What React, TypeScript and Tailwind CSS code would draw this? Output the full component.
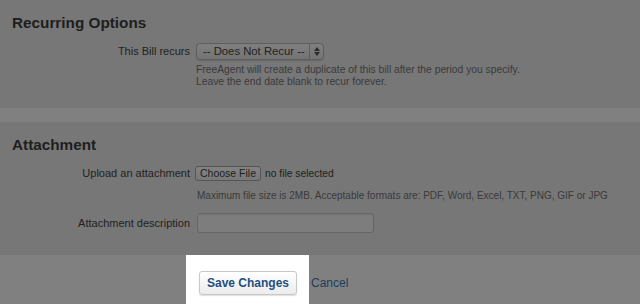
import React from "react";

const font = { fontFamily: '"Liberation Sans", Arial, Helvetica, sans-serif' };

export default function App() {
  return (
    <div className="w-[640px] h-[304px] overflow-hidden bg-[#808080]" style={font}>
      {/* Recurring Options */}
      <section className="h-[108px] bg-[#777777] pt-[14px]">
        <h2 className="pl-[12px] text-[15.3px] leading-[18px] font-bold text-[#1e1e1e]">Recurring Options</h2>
        <div className="mt-[11px] flex">
          <div className="w-[190px] text-right text-[11px] leading-[17px] text-[#222]">This Bill recurs</div>
          <div className="ml-[6px]">
            <div className="flex h-[17px] w-[128px] items-center rounded-[4px] border border-[#5e5e5e] bg-gradient-to-b from-[#7f7f7f] to-[#747474] shadow-[0_1px_1px_rgba(0,0,0,0.15)]">
              <span className="flex-1 pl-[6px] text-[11.3px] leading-[15px] text-[#222] whitespace-nowrap">-- Does Not Recur --</span>
              <span className="flex h-full w-[14px] flex-col items-center justify-center border-l border-[#5e5e5e] gap-[1px]">
                <svg width="6" height="4" viewBox="0 0 6 4"><path d="M3 0 L6 4 L0 4 Z" fill="#2a2a2a" /></svg>
                <svg width="6" height="4" viewBox="0 0 6 4"><path d="M0 0 L6 0 L3 4 Z" fill="#2a2a2a" /></svg>
              </span>
            </div>
            <p className="mt-[4px] text-[10.3px] leading-[12px] text-[#3a3a3a]">
              FreeAgent will create a duplicate of this bill after the period you specify.
              <br />
              Leave the end date blank to recur forever.
            </p>
          </div>
        </div>
      </section>

      <div className="h-[14px] bg-[#808080]" />

      {/* Attachment */}
      <section className="h-[133px] bg-[#777777] pt-[14px]">
        <h2 className="pl-[12px] text-[15.3px] leading-[18px] font-bold text-[#1e1e1e]">Attachment</h2>
        <div className="mt-[12px] flex items-center">
          <div className="w-[190px] text-right text-[11px] leading-[15px] text-[#222]">Upload an attachment</div>
          <button className="ml-[5px] flex h-[15px] w-[66px] items-center justify-center rounded-[3px] border border-[#555] bg-gradient-to-b from-[#828282] to-[#787878] text-[10.5px] leading-[13px] text-[#1e1e1e] whitespace-nowrap">
            Choose File
          </button>
          <span className="ml-[4px] text-[10.3px] leading-[15px] text-[#1e1e1e]">no file selected</span>
        </div>
        <p className="mt-[9px] pl-[197px] text-[10px] leading-[12px] text-[#3a3a3a] whitespace-nowrap">
          Maximum file size is 2MB. Acceptable formats are: PDF, Word, Excel, TXT, PNG, GIF or JPG
        </p>
        <div className="mt-[11px] flex items-center">
          <div className="w-[190px] text-right text-[11px] leading-[15px] text-[#222]">Attachment description</div>
          <div className="ml-[7px] h-[20px] w-[177px] rounded-[3px] border border-[#666] bg-[#7d7d7d] shadow-[inset_0_1px_1px_rgba(0,0,0,0.08)]" />
        </div>
      </section>

      {/* Actions */}
      <div className="flex items-start">
        <div className="ml-[186px] h-[49px] w-[123px] bg-white pl-[13px] pt-[16px]">
          <button className="flex h-[24px] w-[98px] items-center justify-center rounded-[3px] border border-[#c8c8c8] bg-gradient-to-b from-white to-[#ececec] text-[12px] font-bold text-[#1f4f82] shadow-[0_1px_1px_rgba(0,0,0,0.12)]">
            Save Changes
          </button>
        </div>
        <span className="ml-[2px] mt-[21px] text-[12px] leading-[14px] text-[#1d3d5e]">Cancel</span>
      </div>
    </div>
  );
}
